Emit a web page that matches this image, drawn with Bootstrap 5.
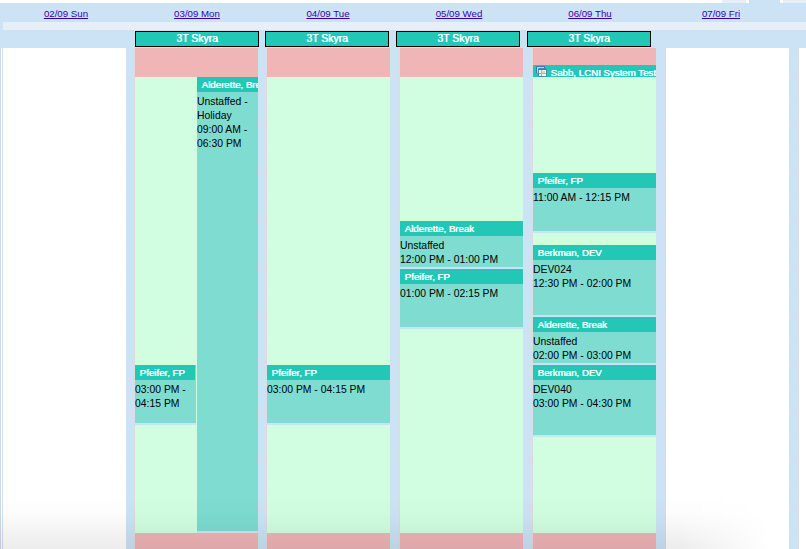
<!DOCTYPE html>
<html lang="en">
<head>
<meta charset="utf-8">
<meta name="viewport" content="width=device-width, initial-scale=1">
<title>Weekly schedule</title>
<link href="https://cdn.jsdelivr.net/npm/bootstrap@5.3.0/dist/css/bootstrap.min.css" rel="stylesheet">
<style>
body { width: 806px; height: 549px; background: #cce3f6; color: #000; font: 10px/14px "Liberation Sans", Arial, sans-serif; }
.tabs-edge { height: 3px; background: #fff; padding-left: 722px; gap: 3px; }
.tab-off { width: 25px; background: #e6eef8; }
.tab-on { width: 33px; background: #cce3f6; }
.days { display: grid; grid-template-columns: repeat(6, 131px); height: 19px; }
.days a { font-size: 9.7px; line-height: 21px; padding-left: 1px; color: #3300b0; text-decoration: underline; }
.band { height: 8px; margin-left: 3px; background: #e6eef8; }
.scanners { display: grid; grid-template-columns: repeat(4, 124px); column-gap: 7px; height: 18px; padding: 1px 0 0 135px; }
.scanner { height: 16px; line-height: 14px; border: 1px solid #000; background: #22c7b6; color: #fff; font-size: 10.4px; text-shadow: .5px 0 #fff; }
.scanner.shifted { margin-left: -1px; margin-right: 1px; }
.calendar { display: grid; height: 501px; grid-template-columns: 126px 132px 132px 133px 133px 133px 17px; }
.slot-grid { background-color: #cce3f6; background-image: linear-gradient(#d6dee7 1px, transparent 1px), linear-gradient(#d0e0ef 1px, transparent 1px); background-size: 100% 48px, 100% 48px; background-position: 0 29px, 0 5px; }
.gutter { width: 9px; flex: none; }
.gutter.narrow { width: 8px; }
.day-body { width: 123px; flex: none; }
.vacant { background: #fff; }
.hours { background: linear-gradient(#f0b5b7 29px, #d1fee1 29px, #d1fee1 485px, #f0b5b7 485px); }
.rule-left { border-left: 1px solid #dcdcdc; }
.edge { width: 3px; flex: none; border-left: 1px solid #d5d9dd; box-shadow: inset 1px 0 #fff; }
.event-box { flex: none; overflow: hidden; background: #7edcd0; border-bottom: 2px solid #cce3f6; }
.event-title { height: 15px; line-height: 15px; padding-left: 4.5px; background: #22c7b6; color: #fff; font-size: 9.7px; white-space: nowrap; overflow: hidden; text-shadow: .5px 0 #fff; }
.event-text { padding-top: 3px; font-size: 10.4px; }
.event-half { width: 61px; }
.event-half .title-short { margin-right: 1px; }
.span-60 { height: 48px; }
.span-75 { height: 60px; }
.span-90 { height: 72px; }
.span-day { height: 456px; }
.at-nine { margin-top: 29px; }
.at-three { margin-top: 317px; }
.at-noon { margin-top: 173px; }
.at-early { margin-top: 17px; }
.after-test { margin-top: 96px; }
.after-quarter { margin-top: 12px; }
.span-test { height: 12px; border: 0; }
.span-test svg { width: 11px; height: 11px; margin: 1px 4px 0 -2px; vertical-align: top; }
.fade-bottom { bottom: 0; left: 0; height: 54px; pointer-events: none; background: linear-gradient(transparent, rgba(0,0,0,.012) 35%, rgba(0,0,0,.075)); -webkit-mask-image: linear-gradient(90deg, #000 680px, transparent 770px); mask-image: linear-gradient(90deg, #000 680px, transparent 770px); }
</style>
<script src="https://cdn.jsdelivr.net/npm/bootstrap@5.3.0/dist/js/bootstrap.bundle.min.js"></script>
</head>
<body class="position-relative overflow-hidden">
<div class="tabs-edge d-flex"><div class="tab-off"></div><div class="tab-on"></div><div class="tab-off"></div></div>
<header>
  <nav class="days text-center">
    <a href="#">02/09 Sun</a><a href="#">03/09 Mon</a><a href="#">04/09 Tue</a><a href="#">05/09 Wed</a><a href="#">06/09 Thu</a><a href="#">07/09 Fri</a>
  </nav>
  <div class="band"></div>
  <div class="scanners text-center">
    <div class="scanner">3T Skyra</div>
    <div class="scanner shifted">3T Skyra</div>
    <div class="scanner shifted">3T Skyra</div>
    <div class="scanner shifted">3T Skyra</div>
  </div>
</header>
<main class="calendar">
  <section class="d-flex"><div class="edge"></div><div class="day-body vacant"></div></section>
  <section class="d-flex slot-grid">
    <div class="gutter narrow"></div>
    <div class="rule-left"></div>
    <div class="day-body hours d-flex justify-content-between align-items-start">
      <article class="event-box event-half span-75 at-three"><div class="event-title title-short">Pfeifer, FP</div><div class="event-text">03:00 PM - 04:15 PM</div></article>
      <article class="event-box event-half span-day at-nine"><div class="event-title">Alderette, Break</div><div class="event-text">Unstaffed - Holiday<br>09:00 AM - 06:30 PM</div></article>
    </div>
  </section>
  <section class="d-flex slot-grid">
    <div class="gutter narrow"></div>
    <div class="rule-left"></div>
    <div class="day-body hours d-flex flex-column">
      <article class="event-box span-75 at-three"><div class="event-title">Pfeifer, FP</div><div class="event-text">03:00 PM - 04:15 PM</div></article>
    </div>
  </section>
  <section class="d-flex slot-grid">
    <div class="gutter"></div>
    <div class="rule-left"></div>
    <div class="day-body hours d-flex flex-column">
      <article class="event-box span-60 at-noon"><div class="event-title">Alderette, Break</div><div class="event-text">Unstaffed<br>12:00 PM - 01:00 PM</div></article>
      <article class="event-box span-75"><div class="event-title">Pfeifer, FP</div><div class="event-text">01:00 PM - 02:15 PM</div></article>
    </div>
  </section>
  <section class="d-flex slot-grid">
    <div class="gutter"></div>
    <div class="rule-left"></div>
    <div class="day-body hours d-flex flex-column">
      <article class="event-box span-test at-early"><div class="event-title"><svg viewBox="0 0 11 11" aria-hidden="true"><path fill="#b9d9ec" stroke="#2b7fb8" d="M.5 7.5v-7h8v2"/><path fill="#f4f9fd" stroke="#3f8cc0" d="M2.5 2.5h8v8h-8z"/><path fill="#2f7fb9" d="M0 0h9v1H0zM3 3h7v1H3z"/><path stroke="#8fb7d4" d="M3 7.5h7M5.5 4v6"/><path fill="#f5d98f" d="M6 5h3v2H6z"/></svg>Sabb, LCNI System Test</div></article>
      <article class="event-box span-75 after-test"><div class="event-title">Pfeifer, FP</div><div class="event-text">11:00 AM - 12:15 PM</div></article>
      <article class="event-box span-90 after-quarter"><div class="event-title">Berkman, DEV</div><div class="event-text">DEV024<br>12:30 PM - 02:00 PM</div></article>
      <article class="event-box span-60"><div class="event-title">Alderette, Break</div><div class="event-text">Unstaffed<br>02:00 PM - 03:00 PM</div></article>
      <article class="event-box span-90"><div class="event-title">Berkman, DEV</div><div class="event-text">DEV040<br>03:00 PM - 04:30 PM</div></article>
    </div>
  </section>
  <section class="d-flex slot-grid">
    <div class="gutter"></div>
    <div class="rule-left"></div>
    <div class="day-body vacant"></div>
  </section>
  <section class="d-flex slot-grid">
    <div class="gutter"></div>
    <div class="rule-left"></div>
    <div class="flex-fill vacant"></div>
  </section>
</main>
<div class="fade-bottom position-absolute w-100"></div>
</body>
</html>
